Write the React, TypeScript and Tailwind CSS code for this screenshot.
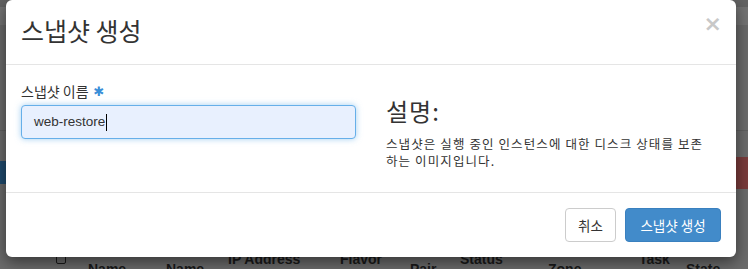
import React from "react";

const KR = '"Noto Sans CJK KR", "Liberation Sans", sans-serif';

function Backdrop() {
  return (
    <div className="absolute inset-0 flex flex-col bg-[#6b6b6b]" style={{ fontFamily: '"Liberation Sans", Arial, sans-serif' }}>
      <div className="h-[7px] bg-[#636363]" />
      <div className="h-[18px] bg-[#737373]" />
      <div className="h-[35px] bg-[#696969]" />
      <div className="h-[71px] bg-[#6c6c6c] border-b border-[#5f5f5f]" />
      <div className="h-[26px]" />
      <div className="flex h-[32px] justify-between">
        <div className="mt-[4px] h-[23px] w-[10px] bg-[#1f4b6e]" />
        <div className="h-[32px] w-[16px] bg-[#7a3c3c]" />
      </div>
      <div className="flex-1" />
      <div className="relative h-[22px] text-[14px] font-bold text-[#1a1a1a]">
        <div className="absolute left-[56px] top-[8px] h-[9px] w-[10px] rounded-[2px] border border-[#1a1a1a]" />
        <span className="absolute left-[88px] top-[12px]">Name</span>
        <span className="absolute left-[166px] top-[12px]">Name</span>
        <span className="absolute left-[228px] top-[2px]">IP Address</span>
        <span className="absolute left-[340px] top-[2px]">Flavor</span>
        <span className="absolute left-[410px] top-[12px]">Pair</span>
        <span className="absolute left-[460px] top-[2px]">Status</span>
        <span className="absolute left-[548px] top-[12px]">Zone</span>
        <span className="absolute left-[639px] top-[2px]">Task</span>
        <span className="absolute left-[686px] top-[12px]">State</span>
      </div>
    </div>
  );
}

export default function App() {
  return (
    <div className="relative h-[269px] w-[748px] overflow-hidden">
      <Backdrop />
      <div
        className="absolute left-[6px] top-0 flex h-[257px] w-[730px] flex-col rounded-[6px] bg-white text-[#333] shadow-[0_5px_15px_rgba(0,0,0,0.5)]"
        style={{ fontFamily: KR }}
      >
        {/* header */}
        <div className="flex h-[65px] items-start justify-between border-b border-[#e5e5e5] pl-[15px] pr-[14px]">
          <h4 className="mt-[13px] text-[25px] leading-[34px] text-[#333]">스냅샷 생성</h4>
          <span
            className="mt-[13px] text-[22px] font-bold leading-[21px] text-[#c8c8c8]"
            style={{ fontFamily: '"DejaVu Sans", sans-serif' }}
          >
            ×
          </span>
        </div>
        {/* body */}
        <div className="grid h-[128px] grid-cols-2 border-b border-[#e5e5e5] px-[15px] pt-[15px]">
          <div className="pr-[15px]">
            <label className="flex h-[23px] items-center text-[14px] text-[#333]">
              스냅샷 이름
              <span className="ml-[5px] text-[13px] text-[#3a8fd8]" style={{ fontFamily: '"DejaVu Sans", sans-serif' }}>✱</span>
            </label>
            <div className="mt-[2px] flex h-[34px] w-[335px] items-center rounded-[4px] border border-[#66afe9] bg-[#e8f0fe] px-[12px] shadow-[0_0_6px_rgba(102,175,233,0.6)]">
              <span className="text-[13.5px] text-[#333]" style={{ fontFamily: '"Liberation Sans", Arial, sans-serif' }}>web-restore</span>
              <span className="ml-px h-[17px] w-px bg-black" />
            </div>
          </div>
          <div className="pl-[15px]">
            <h3 className="mt-[17px] text-[24px] leading-[27px] tracking-[1px] text-[#333]">설명:</h3>
            <p className="mt-[11px] text-[12.5px] leading-[17px] tracking-[1.1px] text-[#333]">
              <span className="block whitespace-nowrap">스냅샷은 실행 중인 인스턴스에 대한 디스크 상태를 보존</span>
              <span className="block whitespace-nowrap">하는 이미지입니다.</span>
            </p>
          </div>
        </div>
        {/* footer */}
        <div className="flex flex-1 items-start justify-end gap-[9px] px-[15px] pt-[15px]">
          <button className="h-[34px] w-[51px] rounded-[4px] border border-[#ccc] bg-white text-[13.5px] text-[#333]">취소</button>
          <button className="h-[34px] w-[96px] rounded-[4px] border border-[#3a80bf] bg-[#428bca] text-[13.5px] text-white">스냅샷 생성</button>
        </div>
      </div>
    </div>
  );
}
